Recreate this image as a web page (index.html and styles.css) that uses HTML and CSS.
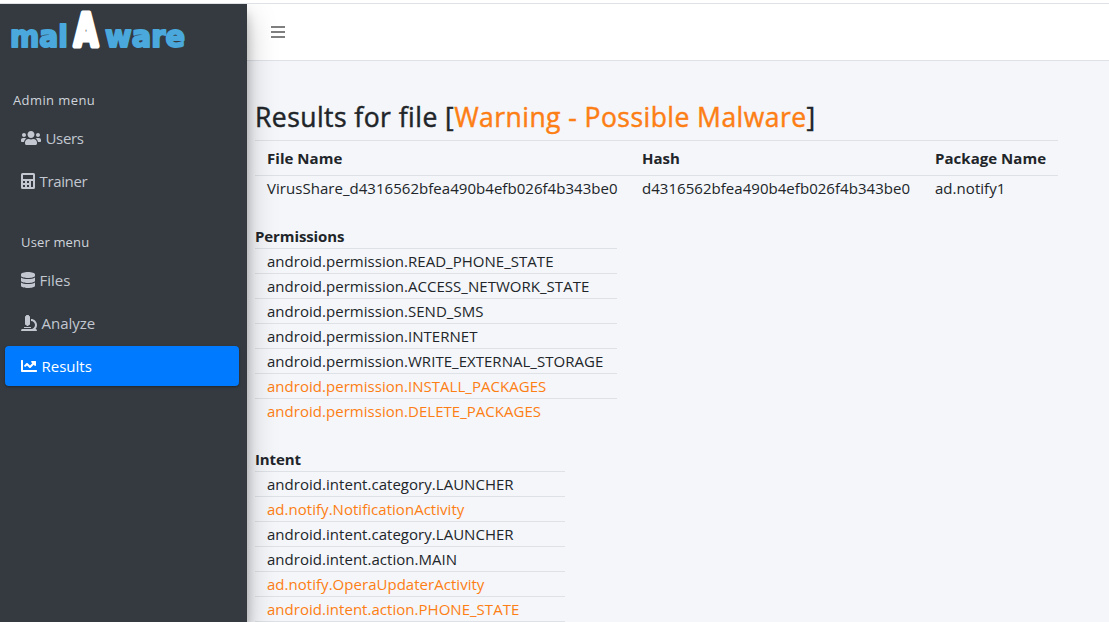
FILE: index.html
```html
<!DOCTYPE html>
<html lang="en">
<head>
<meta charset="utf-8">
<title>malAware</title>
<link rel="stylesheet" href="styles.css">
</head>
<body>
<div class="app">
  <aside class="sidebar">
    <svg class="brand" width="190" height="50" viewBox="0 0 190 50" aria-label="malAware">
      <text class="brand-side" x="10" y="43" textLength="58" lengthAdjust="spacingAndGlyphs">mal</text>
      <text class="brand-mid" x="74" y="41.500" textLength="24" lengthAdjust="spacingAndGlyphs">A</text>
      <text class="brand-side" x="105" y="43" textLength="80" lengthAdjust="spacingAndGlyphs">ware</text>
    </svg>
    <nav class="menu">
      <div class="menu-title menu-title-admin">Admin menu</div>
      <a class="item"><svg width="20" height="16" viewBox="0 0 640 512"><path d="M96 224c35.3 0 64-28.7 64-64s-28.700-64-64-64-64 28.700-64 64 28.700 64 64 64zm448 0c35.300 0 64-28.700 64-64s-28.700-64-64-64-64 28.700-64 64 28.700 64 64 64zm32 32h-64c-17.600 0-33.500 7.100-45.100 18.600 40.300 22.100 68.900 62 75.100 109.400h66c17.700 0 32-14.300 32-32v-32c0-35.300-28.700-64-64-64zm-256 0c61.900 0 112-50.100 112-112S381.900 32 320 32 208 82.100 208 144s50.100 112 112 112zm76.800 32h-8.300c-20.800 10-43.900 16-68.500 16s-47.600-6-68.500-16h-8.300C179.600 288 128 339.600 128 403.200V432c0 26.500 21.500 48 48 48h288c26.500 0 48-21.500 48-48v-28.800c0-63.600-51.600-115.200-115.200-115.200zm-223.700-13.400C161.500 263.100 145.600 256 128 256H64c-35.300 0-64 28.700-64 64v32c0 17.700 14.300 32 32 32h65.900c6.300-47.400 34.900-87.300 75.200-109.400z"/></svg><span class="tight">Users</span></a>
      <a class="item"><svg width="14" height="16" viewBox="0 0 448 512"><path fill-rule="evenodd" d="M48 0h352q48 0 48 48v416q0 48-48 48H48q-48 0-48-48V48Q0 0 48 0zM64 64v128h320V64zM64 256v64h64v-64zM192 256v64h64v-64zM320 256v192h64V256zM64 384v64h64v-64zM192 384v64h64v-64z"/></svg><span class="tight">Trainer</span></a>
      <div class="menu-title menu-title-user">User menu</div>
      <a class="item"><svg width="14" height="16" viewBox="0 0 448 512"><path d="M448 73.143v45.714C448 159.143 347.667 192 224 192S0 159.143 0 118.857V73.143C0 32.857 100.333 0 224 0s224 32.857 224 73.143zM448 176v102.857C448 319.143 347.667 352 224 352S0 319.143 0 278.857V176c48.125 33.143 136.208 48.572 224 48.572S399.874 209.143 448 176zm0 160v102.857C448 479.143 347.667 512 224 512S0 479.143 0 438.857V336c48.125 33.143 136.208 48.572 224 48.572S399.874 369.143 448 336z"/></svg><span>Files</span></a>
      <a class="item"><svg width="16" height="16" viewBox="0 0 512 512"><path d="M160 320h12v16c0 8.840 7.160 16 16 16h40c8.840 0 16-7.160 16-16v-16h12c17.670 0 32-14.330 32-32V64c0-17.670-14.330-32-32-32V16c0-8.840-7.160-16-16-16h-64c-8.840 0-16 7.160-16 16v16c-17.670 0-32 14.330-32 32v224c0 17.670 14.330 32 32 32zm304 128h-1.290C493.240 413.990 512 369.200 512 320c0-105.880-86.120-192-192-192v64c70.580 0 128 57.420 128 128s-57.420 128-128 128H48c-26.510 0-48 21.490-48 48 0 8.840 7.160 16 16 16h480c8.840 0 16-7.160 16-16 0-26.510-21.490-48-48-48zm-360-32h208c4.420 0 8-3.580 8-8v-16c0-4.420-3.580-8-8-8H104c-4.420 0-8 3.580-8 8v16c0 4.420 3.580 8 8 8z"/></svg><span>Analyze</span></a>
      <a class="item active"><svg width="16" height="16" viewBox="0 0 512 512"><path d="M496 384H64V80c0-8.840-7.160-16-16-16H16C7.160 64 0 71.160 0 80v336c0 17.670 14.330 32 32 32h464c8.840 0 16-7.160 16-16v-32c0-8.840-7.160-16-16-16zM464 96H345.940c-21.380 0-32.090 25.850-16.970 40.970l32.400 32.400L288 242.750l-73.370-73.370c-12.500-12.500-32.760-12.500-45.250 0l-68.690 68.690c-6.250 6.250-6.250 16.380 0 22.630l22.620 22.620c6.250 6.250 16.380 6.250 22.630 0L192 237.250l73.370 73.370c12.500 12.500 32.760 12.500 45.250 0l96-96 32.400 32.400c15.120 15.120 40.970 4.410 40.970-16.970V112c.01-8.840-7.150-16-15.990-16z"/></svg><span>Results</span></a>
    </nav>
  </aside>
  <div class="page">
    <header class="topbar">
      <svg width="14" height="12" viewBox="0 0 14 12"><path d="M0 0h14v2H0zM0 5h14v2H0zM0 10h14v2H0z"/></svg>
    </header>
    <main class="content">
      <h1 class="title"><span>Results for file [</span><span class="warn">Warning - Possible Malware</span><span>]</span></h1>
      <div class="summary">
        <div class="summary-row head"><span>File Name</span><span>Hash</span><span>Package Name</span></div>
        <div class="summary-row"><span>VirusShare_d4316562bfea490b4efb026f4b343be0</span><span>d4316562bfea490b4efb026f4b343be0</span><span>ad.notify1</span></div>
      </div>
      <h2 class="section">Permissions</h2>
      <ul class="list permissions">
        <li>android.permission.READ_PHONE_STATE</li>
        <li>android.permission.ACCESS_NETWORK_STATE</li>
        <li>android.permission.SEND_SMS</li>
        <li>android.permission.INTERNET</li>
        <li>android.permission.WRITE_EXTERNAL_STORAGE</li>
        <li class="warn">android.permission.INSTALL_PACKAGES</li>
        <li class="warn">android.permission.DELETE_PACKAGES</li>
      </ul>
      <h2 class="section">Intent</h2>
      <ul class="list intents">
        <li>android.intent.category.LAUNCHER</li>
        <li class="warn">ad.notify.NotificationActivity</li>
        <li>android.intent.category.LAUNCHER</li>
        <li>android.intent.action.MAIN</li>
        <li class="warn">ad.notify.OperaUpdaterActivity</li>
        <li class="warn">android.intent.action.PHONE_STATE</li>
        <li></li>
      </ul>
    </main>
  </div>
</div>
</body>
</html>
```
FILE: styles.css
```css
* { box-sizing: border-box; }
body {
  margin: 0;
  height: 622px;
  overflow: hidden;
  background: #fff;
  color: #212529;
  font: 15px/24px "Open Sans", "Noto Sans", sans-serif;
}
.app {
  display: flex;
  height: 619px;
  margin-top: 3px;
  border-top: 1px solid #dee2e6;
  overflow: hidden;
}
.sidebar {
  position: relative;
  z-index: 1;
  flex: 0 0 247px;
  background: #343a40;
  box-shadow: 0 14px 28px rgba(0,0,0,.25), 0 10px 10px rgba(0,0,0,.22);
}
.brand { display: block; overflow: visible; }
.brand text { font-family: "DejaVu Sans", sans-serif; font-weight: 700; stroke-linejoin: round; }
.brand-side { font-size: 30px; fill: #4aa8dc; stroke: #4aa8dc; stroke-width: 2px; }
.brand-mid { font-size: 44px; fill: #fff; stroke: #fff; stroke-width: 5px; }
.menu { display: flex; flex-direction: column; gap: 3px; padding: 34px 8px 0 5px; }
.menu-title { font-size: 13px; line-height: 24px; color: #d0d4db; }
.menu-title-admin { padding-left: 8px; height: 27px; letter-spacing: .4px; }
.menu-title-user { padding: 26px 0 0 16px; height: 53px; letter-spacing: .15px; }
.item {
  display: flex;
  align-items: center;
  gap: 4.500px;
  height: 40px;
  padding: 0 16px;
  border-radius: 4px;
  color: #c2c7d0;
}
.item svg { flex: none; fill: currentColor; }
.tight { letter-spacing: -.35px; }
.active {
  background: #007bff;
  color: #fff;
  box-shadow: 0 1px 3px rgba(0,0,0,.12), 0 1px 2px rgba(0,0,0,.24);
}
.page { flex: 1; background: #f4f6f9; }
.topbar {
  height: 57px;
  padding: 22px 0 0 24px;
  background: #fff;
  border-bottom: 1px solid #dee2e6;
}
.topbar svg { display: block; fill: #7f7f7f; }
.content { padding: 39px 8px 0; }
.title {
  display: flex;
  margin: 0;
  height: 40px;
  font-size: 26.500px;
  line-height: 34px;
  font-weight: 500;
  letter-spacing: .45px;
  white-space: pre;
  -webkit-text-stroke: .45px currentColor;
}
.warn { color: #fd7e14; }
.summary { width: 803px; }
.summary-row {
  display: grid;
  grid-template-columns: 375px 293px 1fr;
  height: 25px;
  padding-left: 12px;
  border-top: 1px solid #dee2e6;
  letter-spacing: .04px;
}
.summary-row.head { height: 35px; padding-top: 5px; font-weight: 700; }
.section { margin: 24px 0 0; height: 24px; font-size: 15px; line-height: 24px; font-weight: 700; letter-spacing: -.1px; }
.list { margin: 0; padding: 0; list-style: none; }
.list li { height: 25px; padding-left: 12px; border-top: 1px solid #dee2e6; letter-spacing: .03px; }
.permissions { width: 362px; }
.intents { width: 310px; }
```
